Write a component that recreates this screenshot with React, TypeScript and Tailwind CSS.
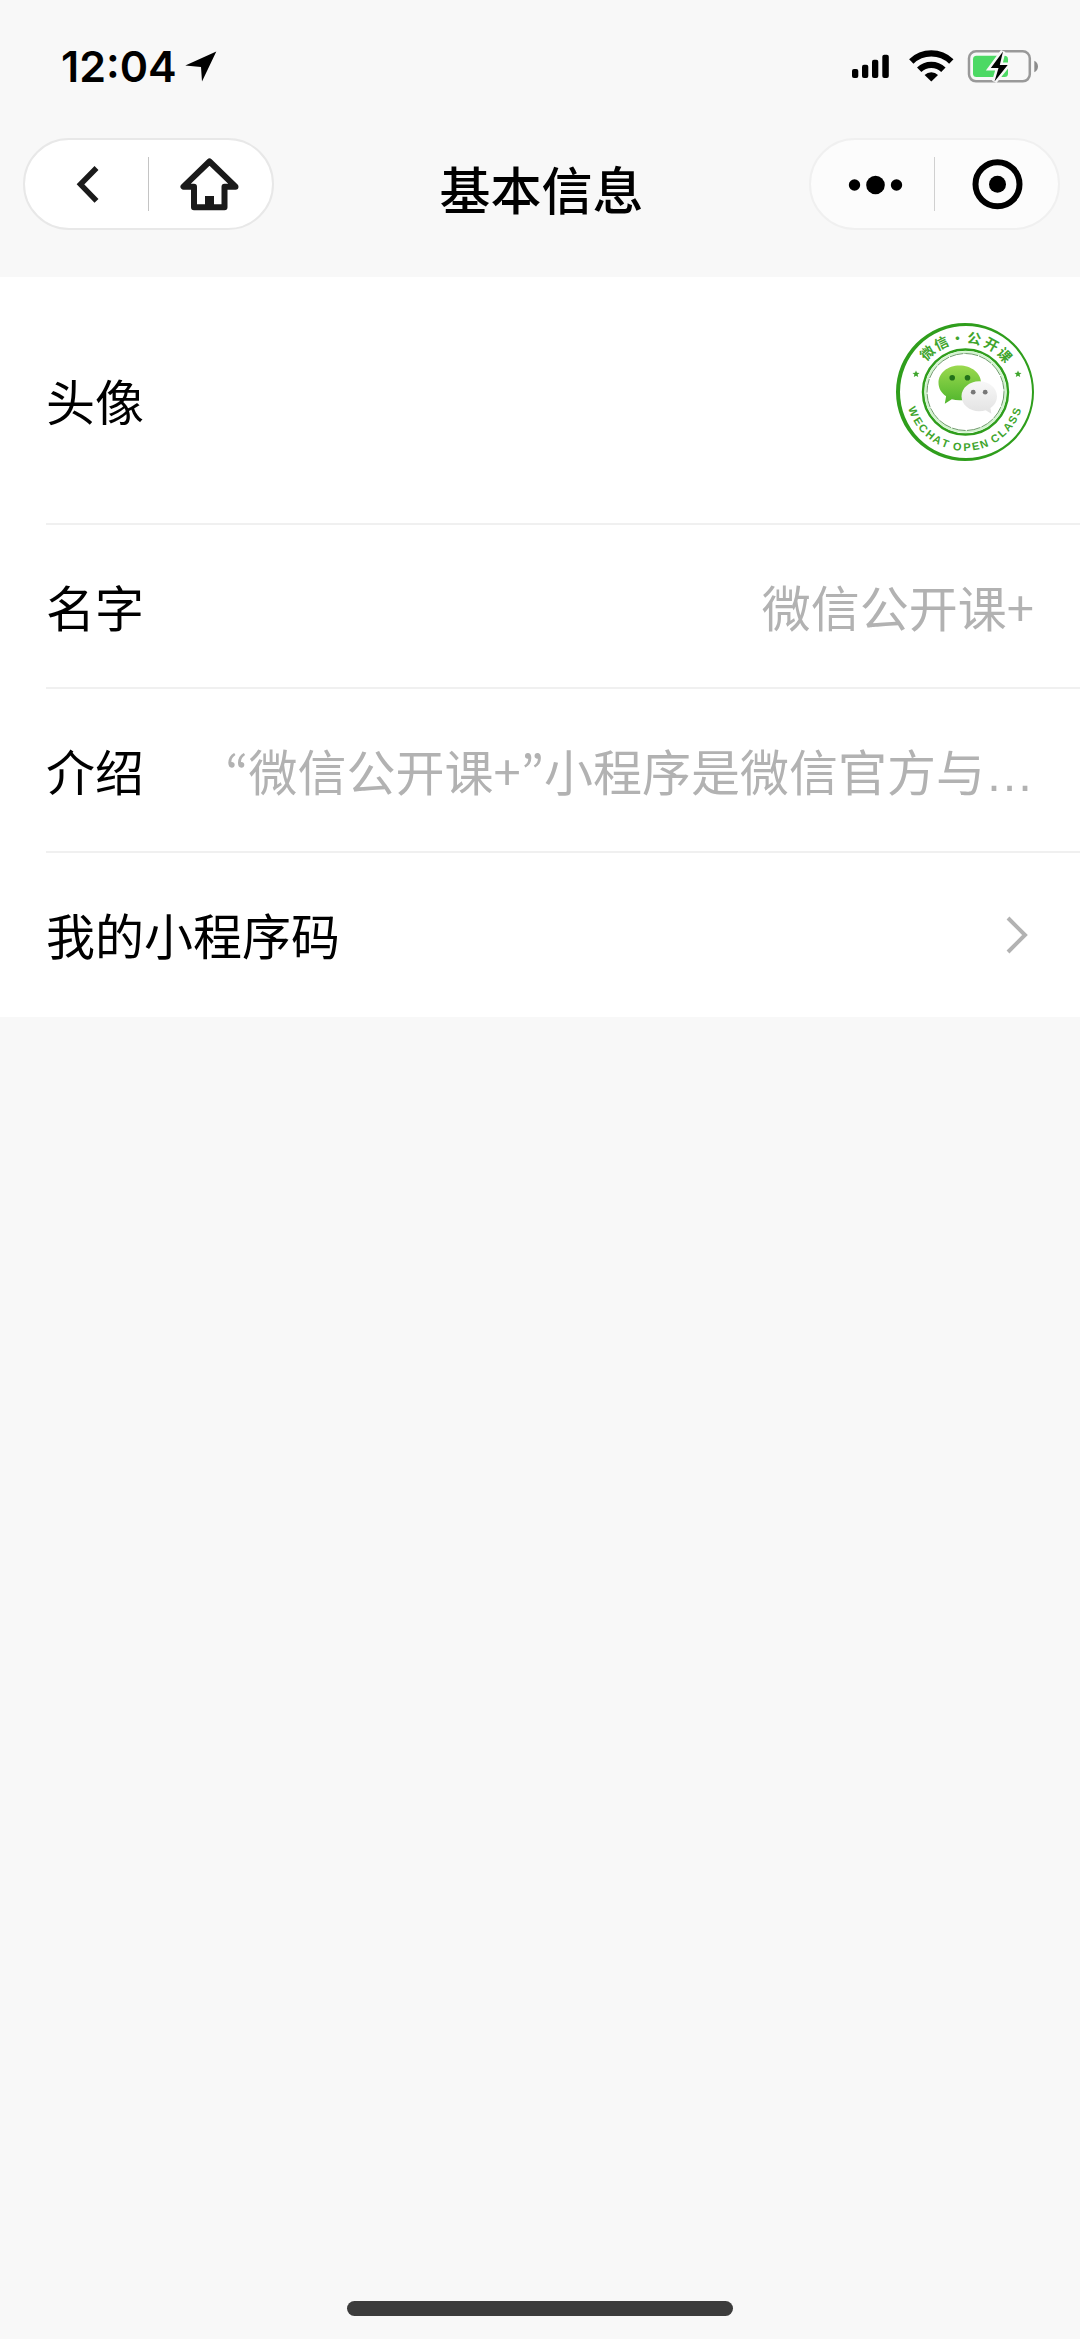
import type { ReactNode } from "react";

const topLabel: [string, number][] = [
  ["微", -44],
  ["信", -26],
  ["·", -8],
  ["公", 10],
  ["开", 29],
  ["课", 47],
];

const bottomLabel: [string, number][] = [
  ["W", 69], ["E", 58], ["C", 49], ["H", 39], ["A", 30], ["T", 21],
  ["O", 8], ["P", -2], ["E", -11], ["N", -20],
  ["C", -33], ["L", -42], ["A", -51], ["S", -60], ["S", -69],
];

function Avatar() {
  return (
    <svg className="size-[138px]" viewBox="0 0 138 138" role="img" aria-label="微信公开课">
      <defs>
        <linearGradient id="greenBubble" x1="0" y1="0" x2="0" y2="1">
          <stop offset="0" stopColor="#9bd94f" />
          <stop offset="1" stopColor="#4fb52c" />
        </linearGradient>
        <linearGradient id="greyBubble" x1="0" y1="0" x2="0" y2="1">
          <stop offset="0" stopColor="#f8f8f8" />
          <stop offset="1" stopColor="#e2e2e2" />
        </linearGradient>
      </defs>
      <path
        fill="#2f9e1c"
        fillRule="evenodd"
        d="M69 0a69 69 0 1 0 0 138a69 69 0 1 0 0-138zM70 3a66 66 0 1 1 0 132a66 66 0 1 1 0-132z"
      />
      <circle cx="69.500" cy="69" r="42.500" fill="#fff" stroke="#2f9e1c" strokeWidth="2.500" />
      <circle cx="69.500" cy="69" r="40" fill="none" stroke="#d3f5cf" strokeWidth="2" />
      <circle cx="69.500" cy="69" r="38.500" fill="none" stroke="#6f9a6c" strokeWidth="1" strokeDasharray="14 1" />
      <g fill="#3fa52d" textAnchor="middle" className="font-['Noto_Sans_CJK_SC',sans-serif] text-[14px] font-bold">
        {topLabel.map(([c, a]) => (
          <text key={c} x="69" y="20" transform={`rotate(${a} 69 69)`}>{c}</text>
        ))}
      </g>
      <g fill="#3fa52d" textAnchor="middle" className="font-['Liberation_Sans',sans-serif] text-[11px] font-bold">
        {bottomLabel.map(([c, a]) => (
          <text key={a} x="69" y="128" transform={`rotate(${a} 69 69)`}>{c}</text>
        ))}
      </g>
      <path id="star" fill="#3fa52d" d="M20 47.500l1 2.300 2.500.2-1.900 1.600.6 2.400-2.200-1.300-2.200 1.300.6-2.400-1.900-1.600 2.500-.2z" />
      <use href="#star" x="102" />
      <path
        fill="url(#greenBubble)"
        d="M63.500 42.500c-11.800 0-21 7.500-21 17.300 0 5.700 2.900 10.200 7.600 13.400l-1.300 7.600 7-4.600c2.400.7 5 1.100 7.700 1.100 11.800 0 21.500-7.700 21.500-17.500s-9.700-17.300-21.500-17.300z"
      />
      <circle cx="56.200" cy="54.800" r="2.800" fill="#22701a" />
      <circle cx="71.500" cy="54.800" r="2.800" fill="#22701a" />
      <path
        fill="url(#greyBubble)"
        d="M83.200 58.200c-9.700 0-17.700 6.700-17.700 15s8 15 17.700 15c2.300 0 4.500-.4 6.500-1l5.700 3.600-1-5.700c4.100-2.800 6.600-7 6.600-11.900 0-8.300-8.100-15-17.800-15z"
      />
      <circle cx="77.200" cy="69.200" r="2.400" fill="#777" />
      <circle cx="89.200" cy="69.200" r="2.400" fill="#777" />
    </svg>
  );
}

function StatusBar() {
  return (
    <div className="flex h-[138px] items-start justify-between pt-10 pr-10 pl-[61px]">
      <div className="flex items-center gap-2">
        <span className="font-['Inter',sans-serif] text-[43px] leading-[52px] font-semibold">12:04</span>
        <svg className="h-8 w-8" viewBox="185 52 32 32" aria-hidden="true">
          <path d="M216.300 53.500L185.300 67.500 201 69 202 83.500z" />
        </svg>
      </div>
      <svg className="h-[52px] w-[190px]" viewBox="850 40 190 52" aria-hidden="true">
        <rect x="852" y="69" width="6.300" height="9" rx="2" />
        <rect x="862" y="64.700" width="6.300" height="13.300" rx="2" />
        <rect x="872" y="59.700" width="6.300" height="18.300" rx="2" />
        <rect x="882.300" y="54.700" width="6.500" height="23.300" rx="2" />
        <path fill="none" stroke="#000" strokeWidth="6.300" d="M911.300 61.500a28.900 28.900 0 0 1 40 0M919.200 69.700a17.500 17.500 0 0 1 24.200 0" />
        <path d="M931.300 81.500l-6.700-6.500a9.700 9.700 0 0 1 13.400 0z" />
        <rect x="969" y="51.300" width="60.800" height="30" rx="7" fill="none" stroke="#999" strokeWidth="2.500" />
        <rect x="973" y="55.700" width="35" height="21.300" rx="3.500" fill="#4cd964" />
        <path fill="#8c8c8c" d="M1034.300 60.700c2.300 1 3.700 3.300 3.700 5.800s-1.400 4.800-3.700 5.800z" />
        <path
          stroke="#f8f8f8"
          strokeWidth="5"
          paintOrder="stroke"
          d="M1003 51.500L990.800 68h7.700l-4 13.500 13.200-16.500h-7.900z"
        />
      </svg>
    </div>
  );
}

function CapsuleButton({ label, children }: { label: string; children: ReactNode }) {
  return (
    <button type="button" aria-label={label} className="flex h-[88px] flex-1 items-center justify-center">
      <svg className="h-[88px] w-[122px]" viewBox="0 0 122 88" aria-hidden="true">
        {children}
      </svg>
    </button>
  );
}

function NavBar() {
  return (
    <div className="grid grid-cols-[1fr_auto_1fr] items-center pr-5 pb-[47px] pl-[23px]">
      <div className="flex w-[251px] items-center rounded-full border-2 border-[#e8e8e8] bg-white">
        <CapsuleButton label="返回">
          <path fill="none" stroke="#1a1a1a" strokeWidth="5.500" d="M70.500 28L54.500 44.300 70.500 60.800" />
        </CapsuleButton>
        <span className="h-[54px] w-px bg-[#c4c4c4]" />
        <CapsuleButton label="主页">
          <path
            fill="none"
            stroke="#1a1a1a"
            strokeWidth="6"
            strokeLinejoin="round"
            d="M59.500 21.500L33.500 46.700H44V67.300H74.500V46.700H85.500z"
          />
          <path fill="#1a1a1a" d="M55 56h9v11h-9z" />
        </CapsuleButton>
      </div>
      <h1 className="pt-2 text-[51px] leading-[72px] font-medium">基本信息</h1>
      <div className="flex w-[251px] items-center justify-self-end rounded-full border-2 border-[#f0f0f0] bg-[#fcfcfc]">
        <CapsuleButton label="更多">
          <circle cx="42.500" cy="45" r="5.700" />
          <circle cx="63.500" cy="45" r="9.300" />
          <circle cx="84.500" cy="45" r="5.700" />
        </CapsuleButton>
        <span className="h-[54px] w-px bg-[#d0d0d0]" />
        <CapsuleButton label="关闭">
          <circle cx="61.500" cy="44.300" r="22" fill="none" stroke="#000" strokeWidth="6" />
          <circle cx="61.500" cy="44.300" r="8.500" />
        </CapsuleButton>
      </div>
    </div>
  );
}

const row = "flex items-center justify-between border-b-2 py-[46px] pr-[46px] text-[49px] leading-[70px]";
const value = "text-[#b2b2b2]";
const narrow = "font-['Noto_Sans_CJK_KR',sans-serif]";

export default function App() {
  return (
    <div className="flex min-h-screen flex-col bg-[#f8f8f8] font-['Noto_Sans_CJK_SC',sans-serif] text-black">
      <header>
        <StatusBar />
        <NavBar />
      </header>
      <main>
        <ul className="bg-white pl-[46px]">
          <li className={`${row} border-[#f0f0f0]`}>
            <span>头像</span>
            <span className="pb-4">
              <Avatar />
            </span>
          </li>
          <li className={`${row} border-[#f0f0f0]`}>
            <span>名字</span>
            <span className={value}>微信公开课+</span>
          </li>
          <li className={`${row} border-[#f0f0f0]`}>
            <span>介绍</span>
            <span className={`${value} whitespace-nowrap`}>
              <span className={narrow}>“</span>微信公开课+<span className={narrow}>”</span>小程序是微信官方与
              <span className="font-['Liberation_Sans',sans-serif] leading-none">…</span>
            </span>
          </li>
          <li>
            <a href="#code" className={`${row} border-transparent`}>
              <span>我的小程序码</span>
              <svg className="h-10 w-7" viewBox="0 0 28 40" aria-hidden="true">
                <path fill="none" stroke="#b2b2b2" strokeWidth="4" d="M2 4l17 17-17 17" />
              </svg>
            </a>
          </li>
        </ul>
      </main>
      <div className="mx-auto mt-auto mb-[23px] h-[15px] w-[386px] rounded-full bg-[#3c3c3c]" />
    </div>
  );
}
